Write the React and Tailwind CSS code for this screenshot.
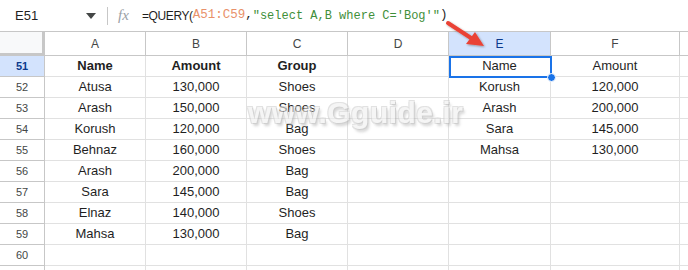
import React from "react";

const cols = ["A", "B", "C", "D", "E", "F"];

const rows = [
  { n: 51, a: "Name", b: "Amount", c: "Group", e: "Name", f: "Amount", head: true },
  { n: 52, a: "Atusa", b: "130,000", c: "Shoes", e: "Korush", f: "120,000" },
  { n: 53, a: "Arash", b: "150,000", c: "Shoes", e: "Arash", f: "200,000" },
  { n: 54, a: "Korush", b: "120,000", c: "Bag", e: "Sara", f: "145,000" },
  { n: 55, a: "Behnaz", b: "160,000", c: "Shoes", e: "Mahsa", f: "130,000" },
  { n: 56, a: "Arash", b: "200,000", c: "Bag" },
  { n: 57, a: "Sara", b: "145,000", c: "Bag" },
  { n: 58, a: "Elnaz", b: "140,000", c: "Shoes" },
  { n: 59, a: "Mahsa", b: "130,000", c: "Bag" },
  { n: 60 },
  { n: "" },
];

const grid = "grid grid-cols-[45px_101px_101px_101px_101px_102px_129px_1fr]";

function FormulaBar() {
  return (
    <div className="flex h-8 items-center border-b border-[#c7c7c7] bg-white font-['Liberation_Sans',Arial,sans-serif]">
      <div className="w-[80px] pl-[15px] text-[13px] text-[#1f1f1f]">E51</div>
      <svg width="10" height="6" viewBox="0 0 10 6" className="ml-[6px]">
        <path d="M0 0h10L5 6z" fill="#444746" />
      </svg>
      <div className="ml-[11px] h-[18px] w-px bg-[#c7c7c7]" />
      <span className="ml-[10px] w-[24px] font-['Liberation_Serif',serif] text-[15px] italic text-[#9aa0a6]">fx</span>
      <span className="text-[12px] tracking-[-0.4px] text-[#1f1f1f]">=QUERY(</span>
      <span className="font-['Liberation_Mono',monospace] text-[12.5px] text-[#e8916a]">A51:C59</span>
      <span className="font-['Liberation_Mono',monospace] text-[12.5px] text-[#1f1f1f]">,</span>
      <span className="font-['Liberation_Mono',monospace] text-[12px] text-[#3f8f3a]">"select A,B where C='Bog'"</span>
      <span className="font-['Liberation_Mono',monospace] text-[12.5px] text-[#1f1f1f]">)</span>
    </div>
  );
}

function HeaderRow() {
  return (
    <div className={`${grid} h-6 font-['Liberation_Sans',Arial,sans-serif] text-[12px]`}>
      <div className="border-r-[3px] border-b-[3px] border-[#c7c7c7] bg-[#f8f9fa]" />
      {cols.map((c) => (
        <div
          key={c}
          className={
            c === "E"
              ? "flex items-center justify-center border-r border-b border-[#c7c7c7] bg-[#d3e3fd] text-[#0b3a8c]"
              : "flex items-center justify-center border-r border-b border-[#c7c7c7] bg-white text-[#444746]"
          }
        >
          {c}
        </div>
      ))}
      <div className="border-b border-[#c7c7c7] bg-white" />
    </div>
  );
}

function Row({ r }) {
  const cell = "flex items-center justify-center border-r border-b border-[#e1e1e1] text-[13px] text-[#1f1f1f]";
  const bold = r.head ? " font-bold" : "";
  return (
    <div className={`${grid} h-[21px] font-['Liberation_Sans',Arial,sans-serif]`}>
      <div
        className={
          r.n === 51
            ? "flex items-center justify-center border-r border-b border-[#c7c7c7] bg-[#d3e3fd] text-[11px] font-bold text-[#0b3a8c]"
            : "flex items-center justify-center border-r border-b border-[#c7c7c7] bg-white text-[11px] text-[#444746]"
        }
      >
        {r.n}
      </div>
      <div className={cell + bold}>{r.a}</div>
      <div className={cell + bold}>{r.b}</div>
      <div className={cell + bold}>{r.c}</div>
      <div className={cell} />
      <div className={cell}>{r.e}</div>
      <div className={cell}>{r.f}</div>
      <div className="border-b border-[#e1e1e1]" />
    </div>
  );
}

export default function App() {
  return (
    <div className="relative h-[270px] w-[688px] overflow-hidden bg-white">
      <FormulaBar />
      <HeaderRow />
      {rows.map((r, i) => (
        <Row key={i} r={r} />
      ))}

      {/* selected cell E51 */}
      <div className="pointer-events-none absolute left-[449px] top-[56px] h-[22px] w-[103px] border-2 border-[#1a73e8]" />
      <div className="absolute left-[547px] top-[73px] h-[9px] w-[9px] rounded-full border border-white bg-[#1a73e8]" />

      {/* red arrow */}
      <svg className="absolute left-0 top-0" width="688" height="270">
        <defs>
          <filter id="sh" x="-20%" y="-20%" width="140%" height="140%">
            <feDropShadow dx="1" dy="1" stdDeviation="1" floodColor="#000" floodOpacity="0.35" />
          </filter>
        </defs>
        <g filter="url(#sh)">
          <line x1="448" y1="23" x2="471" y2="38" stroke="#ea4335" strokeWidth="4" strokeLinecap="round" />
          <path d="M484 46 L466 44 L475 32 Z" fill="#ea4335" />
        </g>
      </svg>

      {/* watermark */}
      <div className="pointer-events-none absolute left-[248px] top-[90px] font-['Liberation_Sans',Arial,sans-serif] text-[30px] font-bold tracking-[0.5px] text-[#f0f0f0] opacity-60 [text-shadow:1px_1px_0_#b0b0b0,-1px_-1px_0_#cfcfcf,1px_-1px_0_#cfcfcf,-1px_1px_0_#cfcfcf,2px_3px_3px_#b5b5b5]">
        www.Gguide.ir
      </div>
    </div>
  );
}
